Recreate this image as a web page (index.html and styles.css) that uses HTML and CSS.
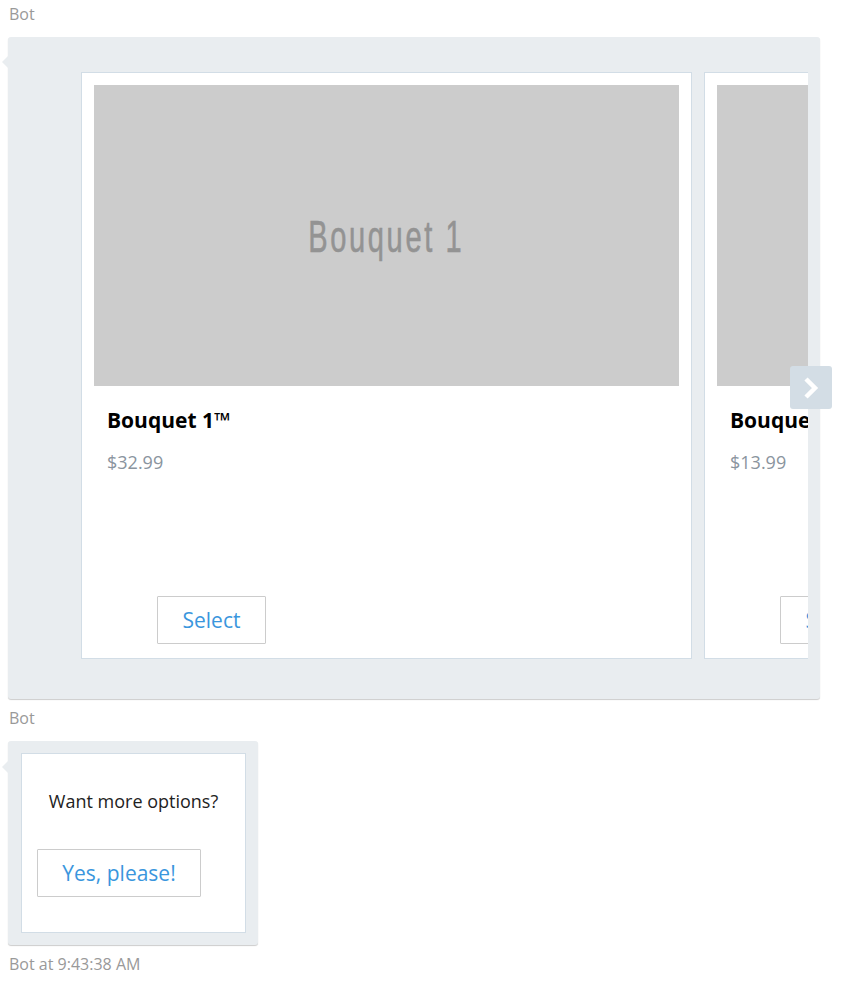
FILE: index.html
```html
<!DOCTYPE html>
<html lang="en">
<head>
    <meta charset="UTF-8">
    <title>Bot chat</title>
    <link rel="stylesheet" href="styles.css">
</head>
<body>
    <div class="message">
        <div class="sender">Bot</div>
        <div class="bubble carousel-bubble">
            <div class="carousel">
                <div class="hero-card">
                    <div class="hero-image"><span>Bouquet 1</span></div>
                    <div class="hero-title">Bouquet 1™</div>
                    <div class="hero-price">$32.99</div>
                    <button class="card-button">Select</button>
                </div>
                <div class="hero-card">
                    <div class="hero-image"><span>Bouquet 2</span></div>
                    <div class="hero-title">Bouquet 2™</div>
                    <div class="hero-price">$13.99</div>
                    <button class="card-button">Select</button>
                </div>
            </div>
            <button class="scroll-next" aria-label="Next">
                <svg width="22" height="24" viewBox="0 0 22 24"><path d="M6 3 L15 12 L6 21" fill="none" stroke="#fff" stroke-width="4.5"/></svg>
            </button>
        </div>
    </div>

    <div class="message">
        <div class="sender">Bot</div>
        <div class="bubble small-bubble">
            <div class="prompt-card">
                <div class="prompt-text">Want more options?</div>
                <button class="card-button">Yes, please!</button>
            </div>
        </div>
        <div class="timestamp">Bot at 9:43:38 AM</div>
    </div>
</body>
</html>
```

FILE: styles.css
```css
body {
    margin: 0;
    padding: 0 8px;
    background-color: #ffffff;
    font-family: "Open Sans", "Noto Sans", sans-serif;
    color: #000000;
}
.sender,
.timestamp {
    font-size: 16px;
    line-height: 20px;
    color: #999999;
    padding-left: 1px;
}
.sender {
    padding-top: 4px;
    margin-bottom: 13px;
}
.timestamp {
    margin-top: 9px;
}
.bubble {
    position: relative;
    background-color: #e9edf0;
    border-radius: 3px;
    box-shadow: 0 1px 1px rgba(0, 0, 0, 0.2);
}
.bubble::before {
    content: "";
    position: absolute;
    left: -6px;
    top: 19px;
    border-top: 6px solid transparent;
    border-bottom: 6px solid transparent;
    border-right: 6px solid #e9edf0;
}
.carousel-bubble {
    width: 727px;
    padding: 35px 12px 40px 73px;
    margin-bottom: 5px;
}
.carousel {
    display: flex;
    gap: 12px;
    overflow: hidden;
}
.hero-card {
    flex: 0 0 585px;
    height: 561px;
    padding: 12px;
    background-color: #ffffff;
    border: 1px solid #d2dde6;
    display: flex;
    flex-direction: column;
}
.hero-image {
    height: 301px;
    background-color: #cccccc;
    display: flex;
    align-items: center;
    justify-content: center;
}
.hero-image span {
    font-family: "Liberation Sans", sans-serif;
    font-size: 44px;
    color: #939393;
    letter-spacing: 4px;
    transform: scaleX(0.66);
    display: inline-block;
    margin-top: 2px;
    -webkit-text-stroke: 0.6px #939393;
}
.hero-title {
    margin: 20px 13px 0;
    font-size: 21px;
    font-weight: 700;
    line-height: 28px;
}
.hero-price {
    margin: 16px 13px 0;
    font-size: 18px;
    line-height: 24px;
    color: #8a949e;
}
.card-button {
    font-family: inherit;
    font-size: 21px;
    color: #3a96dd;
    background-color: #ffffff;
    border: 1px solid #cccccc;
    border-radius: 1px;
    height: 48px;
    padding: 0;
    cursor: pointer;
}
.hero-card .card-button {
    margin: auto 0 2px 63px;
    width: 109px;
    flex-shrink: 0;
}
.scroll-next {
    position: absolute;
    right: -12px;
    top: 329px;
    width: 42px;
    height: 43px;
    border: none;
    border-radius: 3px;
    background-color: #d3dde5;
    display: flex;
    align-items: center;
    justify-content: center;
    padding: 0;
}
.small-bubble {
    width: 225px;
    padding: 12px 12px 12px 13px;
    margin-top: 3px;
}
.small-bubble::before {
    top: 20px;
}
.prompt-card {
    height: 178px;
    background-color: #ffffff;
    border: 1px solid #d2dde6;
    display: flex;
    flex-direction: column;
    align-items: flex-start;
}
.prompt-text {
    align-self: stretch;
    text-align: center;
    font-size: 18px;
    line-height: 24px;
    color: #222222;
    margin-top: 35px;
}
.prompt-card .card-button {
    margin: 36px 0 0 15px;
    width: 164px;
}
```
